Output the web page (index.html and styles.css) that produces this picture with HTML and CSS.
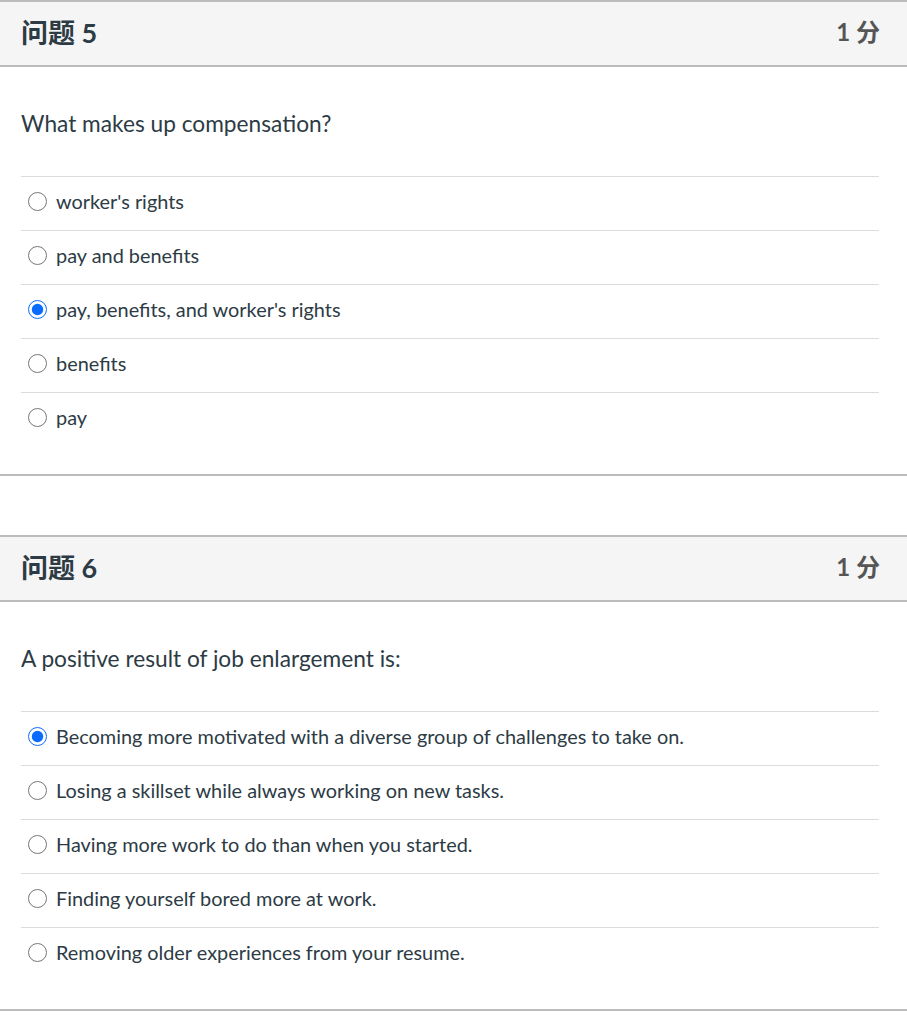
FILE: index.html
```html
<!DOCTYPE html>
<html lang="zh">
<head>
<meta charset="utf-8">
<link rel="stylesheet" href="styles.css">
</head>
<body>
<div class="question">
  <div class="q-header">
    <div class="q-title">问题 5</div>
    <div class="q-points">1 分</div>
  </div>
  <div class="q-body">
    <div class="q-text">What makes up compensation?</div>
    <div class="answers">
      <label class="answer"><input type="radio" name="q5"><span>worker's rights</span></label>
      <label class="answer"><input type="radio" name="q5"><span>pay and benefits</span></label>
      <label class="answer"><input type="radio" name="q5" checked><span>pay, benefits, and worker's rights</span></label>
      <label class="answer"><input type="radio" name="q5"><span>benefits</span></label>
      <label class="answer"><input type="radio" name="q5"><span>pay</span></label>
    </div>
  </div>
</div>
<div class="question">
  <div class="q-header">
    <div class="q-title">问题 6</div>
    <div class="q-points">1 分</div>
  </div>
  <div class="q-body">
    <div class="q-text">A positive result of job enlargement is:</div>
    <div class="answers">
      <label class="answer"><input type="radio" name="q6" checked><span>Becoming more motivated with a diverse group of challenges to take on.</span></label>
      <label class="answer"><input type="radio" name="q6"><span>Losing a skillset while always working on new tasks.</span></label>
      <label class="answer"><input type="radio" name="q6"><span>Having more work to do than when you started.</span></label>
      <label class="answer"><input type="radio" name="q6"><span>Finding yourself bored more at work.</span></label>
      <label class="answer"><input type="radio" name="q6"><span>Removing older experiences from your resume.</span></label>
    </div>
  </div>
</div>
</body>
</html>
```
FILE: styles.css
```css
html, body {
  margin: 0;
  padding: 0;
  background: #fff;
}
body {
  font-family: Lato, "Noto Sans CJK SC", sans-serif;
  color: #2d3b45;
}
.question {
  border-top: 2px solid #bcbcbc;
  border-bottom: 2px solid #bcbcbc;
  padding-bottom: 28px;
}
.question + .question {
  margin-top: 59px;
}
.q-header {
  background: #f5f5f5;
  border-bottom: 2px solid #bcbcbc;
  display: flex;
  align-items: center;
  justify-content: space-between;
  padding: 0 27px 5px 21px;
  box-sizing: border-box;
  height: 65px;
}
.q-title {
  font-family: Lato, "Noto Sans CJK SC", sans-serif;
  font-weight: 700;
  font-size: 27px;
  color: #2d3b45;
}
.q-points {
  font-family: Lato, "Noto Sans CJK SC", sans-serif;
  font-weight: 700;
  font-size: 24px;
  color: #555;
  margin-bottom: 2px;
}
.q-body {
  padding: 0 28px 0 21px;
}
.q-text {
  font-size: 22.7px;
  line-height: 30px;
  padding: 42px 0 37px;
}
.answer {
  display: flex;
  align-items: center;
  box-sizing: border-box;
  padding-bottom: 5px;
  border-top: 1px solid #dcdcdc;
  height: 54px;
  font-size: 19.9px;
}
.answer input {
  width: 19px;
  height: 19px;
  margin: 0 9px 0 7px;
  accent-color: #0a6cff;
}
```
